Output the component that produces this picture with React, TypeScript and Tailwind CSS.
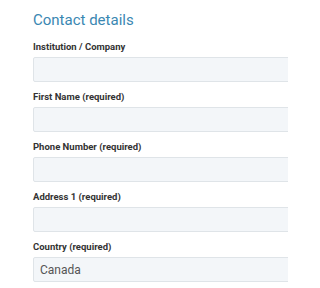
export default function App() {
  const fields = [
    { label: "Institution / Company", value: "" },
    { label: "First Name (required)", value: "" },
    { label: "Phone Number (required)", value: "" },
    { label: "Address 1 (required)", value: "" },
    { label: "Country (required)", value: "Canada" },
  ];
  return (
    <div className="w-[288px] h-[288px] overflow-hidden bg-white pl-[33px] pt-[10px]" style={{ fontFamily: "Roboto, 'Liberation Sans', sans-serif" }}>
      <h2 className="text-[15px] leading-[20px] text-[#3a87b2] font-normal">Contact details</h2>
      <div className="mt-[11px] flex flex-col gap-[9px]">
        {fields.map((f) => (
          <div key={f.label} className="flex flex-col">
            <label className="text-[9.5px] leading-[12px] font-bold text-[#333]">{f.label}</label>
            <div className="mt-[4px] h-[25px] w-[300px] bg-[#f3f6f9] border border-[#dfe4e8] rounded-[2px] flex items-center pl-[6px] text-[12px] text-[#555]">
              {f.value}
            </div>
          </div>
        ))}
      </div>
    </div>
  );
}
